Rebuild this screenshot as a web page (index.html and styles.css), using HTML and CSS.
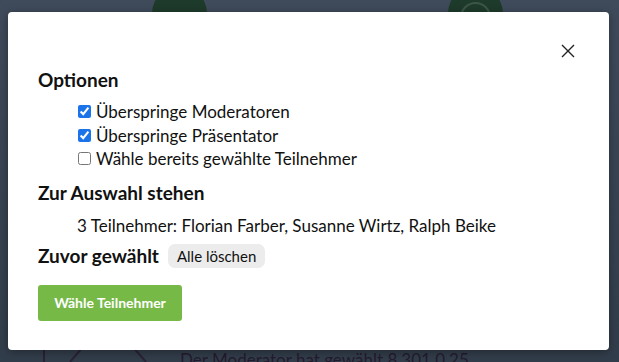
FILE: index.html
```html
<!DOCTYPE html>
<html lang="de">
<head>
<meta charset="UTF-8">
<meta name="viewport" content="width=device-width, initial-scale=1.0">
<title>Zufällige Auswahl</title>
<link rel="stylesheet" href="styles.css">
</head>
<body>
    <div class="backdrop">
        <div class="bg-circle one"></div>
        <div class="bg-circle two"></div>
        <svg class="bg-lines" width="160" height="20" viewBox="0 0 160 20">
            <path d="M44 0 V20 M70 20 L82 6 M132 4 L146 20" stroke="#2a2236" stroke-width="2" fill="none"/>
        </svg>
        <div class="bg-text">Der Moderator hat gewählt 8.301 0.25</div>
    </div>

    <div class="modal">
        <div class="modal-head">
            <button class="close" aria-label="Schließen">
                <svg width="14" height="14" viewBox="0 0 14 14"><path d="M1 1 L13 13 M13 1 L1 13" stroke="#222" stroke-width="1.4" fill="none"/></svg>
            </button>
        </div>

        <h3>Optionen</h3>
        <div class="options">
            <label><input type="checkbox" checked> Überspringe Moderatoren</label>
            <label><input type="checkbox" checked> Überspringe Präsentator</label>
            <label><input type="checkbox"> Wähle bereits gewählte Teilnehmer</label>
        </div>

        <h3>Zur Auswahl stehen</h3>
        <p class="list">3 Teilnehmer: Florian Farber, Susanne Wirtz, Ralph Beike</p>

        <div class="prev">
            <h3>Zuvor gewählt</h3>
            <button class="clear">Alle löschen</button>
        </div>

        <button class="pick">Wähle Teilnehmer</button>
    </div>
</body>
</html>
```

FILE: styles.css
```css
body{
    margin: 0;
    width: 619px;
    height: 362px;
    overflow: hidden;
    font-family: Lato, "Noto Sans", sans-serif;
    color: #111;
    background: linear-gradient(#3f4b5b, #323d4b);
    position: relative;
}

.backdrop{
    position: absolute;
    inset: 0;
}
.bg-circle{
    position: absolute;
    top: -14px;
    width: 55px;
    height: 55px;
    border-radius: 50%;
    background: #1e3a2b;
}
.bg-circle.one{ left: 152px; }
.bg-circle.two{ left: 448px; }
.bg-circle.two::after{
    content: "";
    position: absolute;
    left: 12px;
    top: 16px;
    width: 27px;
    height: 27px;
    border-radius: 50%;
    border: 2px solid #3d5548;
}
.bg-lines{
    position: absolute;
    left: 0;
    top: 342px;
}
.bg-text{
    position: absolute;
    left: 180px;
    top: 352px;
    color: #241b2e;
    font-size: 17px;
    line-height: 16px;
}

.modal{
    position: absolute;
    left: 8px;
    top: 12px;
    width: 601px;
    height: 338px;
    box-sizing: border-box;
    background: #fff;
    border-radius: 4px;
    padding: 0 30px 0 30px;
    box-shadow: 0 2px 10px rgba(0,0,0,0.35);
}
.modal-head{
    display: flex;
    justify-content: flex-end;
    height: 56px;
    padding-right: 4px;
}
.close{
    background: none;
    border: none;
    padding: 0;
    margin-top: 32px;
    width: 14px;
    height: 14px;
    cursor: pointer;
}

h3{
    margin: 0;
    font-size: 19px;
    font-weight: 700;
    line-height: 24px;
}

.options{
    display: flex;
    flex-direction: column;
    padding: 8px 0 10px 40px;
}
.options label{
    font-size: 17px;
    line-height: 23.5px;
    display: flex;
    align-items: center;
    gap: 5px;
}
.options input{
    margin: 0;
    width: 13px;
    height: 13px;
    accent-color: #1a73e8;
}

.list{
    margin: 9px 0 6px 39px;
    font-size: 17px;
    line-height: 24px;
}

.prev{
    display: flex;
    align-items: center;
    gap: 9px;
}
.clear{
    font-family: inherit;
    font-size: 15px;
    background: #ececec;
    border: none;
    border-radius: 7px;
    padding: 3px 9px;
    color: #111;
    cursor: pointer;
}

.pick{
    margin-top: 17px;
    font-family: inherit;
    font-size: 14px;
    font-weight: 700;
    color: #fff;
    background: #76b947;
    border: none;
    border-radius: 3px;
    width: 144px;
    height: 36px;
    cursor: pointer;
}
```
